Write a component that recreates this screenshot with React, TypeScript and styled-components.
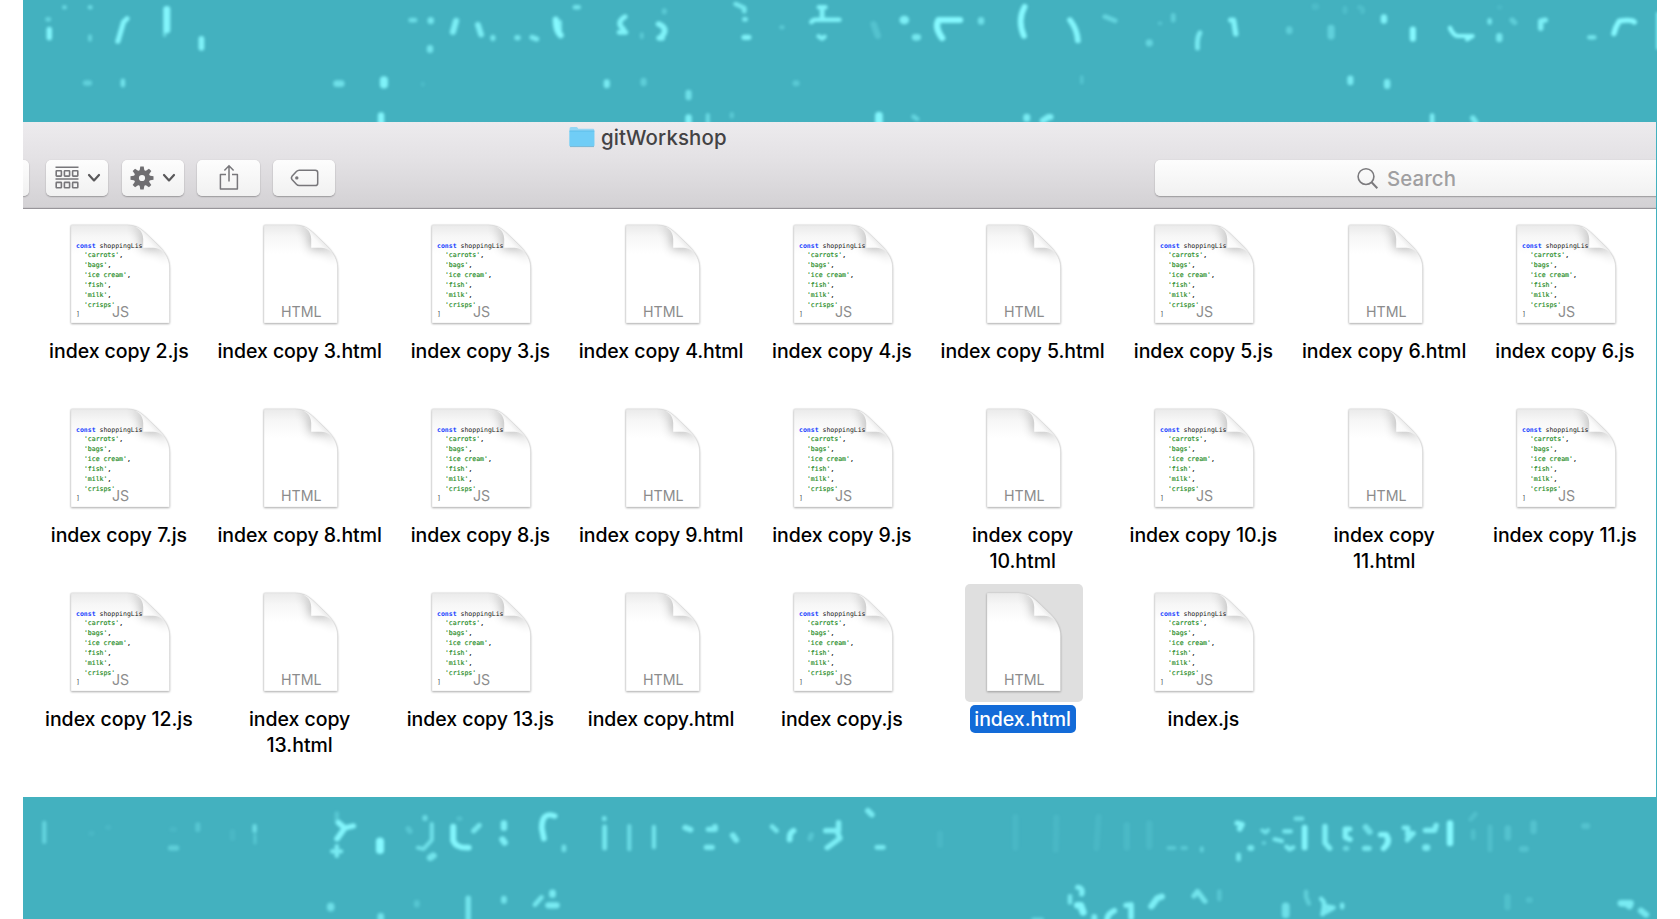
import React from "react";
import styled, { createGlobalStyle } from "styled-components";

const GlobalStyle = createGlobalStyle`
  *, *::before, *::after { box-sizing: border-box; }
  html, body { margin: 0; padding: 0; background: #fff; overflow: hidden; }
  body { font-family: Inter, "Liberation Sans", sans-serif; }
`;

const Stage = styled.main`
  width: 1634px;
  height: 919px;
  margin-left: 23px;
  background: #43b1bf;
  overflow: hidden;
  display: flex;
  flex-direction: column;
`;

const Band = styled.svg`
  display: block;
  flex: none;
  width: 1634px;
  height: 122px;
`;

const FinderWindow = styled.section`
  width: 1633px;
  height: 675px;
  flex: none;
  background: #fff;
  overflow: hidden;
`;

const Header = styled.header`
  height: 87px;
  background: linear-gradient(#edebee, #e3e1e4 45%, #d3d1d4);
  border-bottom: 1px solid #98959a;
  box-shadow: inset 0 -1px 0 #c9c7ca;
  display: flex;
  flex-direction: column;
`;

const TitleBar = styled.div`
  height: 38px;
  padding: 2px 0 0 546px;
  display: flex;
  align-items: flex-start;
  gap: 6px;
`;

const Title = styled.h1`
  margin: 0;
  font-size: 20.4px;
  line-height: 27px;
  font-weight: 450;
  letter-spacing: 0.15px;
  color: #434244;
`;

const FolderIcon = styled.svg`
  width: 26px;
  height: 22px;
  margin-top: 2px;
`;

const Toolbar = styled.div`
  height: 36px;
  display: flex;
`;

const ToolButton = styled.button<{ $gap?: number }>`
  width: 62.3px;
  height: 36px;
  margin: 0 13.4px 0 0;
  padding: 0;
  border: 0;
  border-radius: 5px;
  background: linear-gradient(#fdfdfd, #f1f1f1);
  box-shadow: 0 1px 1.5px rgba(0, 0, 0, 0.28), 0 0 1px rgba(0, 0, 0, 0.15);
  display: flex;
  align-items: center;
  justify-content: center;
  gap: ${(p) => p.$gap ?? 0}px;
  flex: none;
`;

const ClippedButton = styled(ToolButton)`
  width: 6px;
  margin-right: 17px;
  border-radius: 0 5px 5px 0;
`;

const Glyph = styled.svg`
  display: block;
  flex: none;
  overflow: visible;
`;

const SearchField = styled.div`
  width: 580px;
  height: 36px;
  margin-left: auto;
  margin-right: -79px;
  padding-left: 202px;
  flex: none;
  border-radius: 5px 0 0 5px;
  background: linear-gradient(#fdfdfd, #f1f1f1);
  box-shadow: 0 1px 1.5px rgba(0, 0, 0, 0.28), 0 0 1px rgba(0, 0, 0, 0.15);
  display: flex;
  align-items: center;
  gap: 9px;
  font-size: 20.4px;
  font-weight: 450;
  letter-spacing: 0.1px;
  color: #a09fa1;
`;

const FileGrid = styled.div`
  padding: 6.5px 0 0 5.5px;
  display: grid;
  grid-template-columns: repeat(9, 180.75px);
  grid-auto-rows: 184px;
`;

const FileItem = styled.div`
  display: flex;
  flex-direction: column;
  align-items: center;
`;

const Thumb = styled.div<{ $selected: boolean }>`
  width: 118px;
  height: 118px;
  margin-left: 2.4px;
  border-radius: 5px;
  background: ${(p) => (p.$selected ? "#dfdfdf" : "transparent")};
  display: flex;
  align-items: center;
  justify-content: center;
`;

const Label = styled.div<{ $selected: boolean }>`
  margin-top: 3px;
  padding: 1.4px 4.8px 0.6px;
  border-radius: 5px;
  font-size: 19.5px;
  line-height: 26.2px;
  font-weight: 450;
  text-align: center;
  white-space: pre-line;
  letter-spacing: -0.05px;
  color: ${(p) => (p.$selected ? "#fff" : "#000")};
  background: ${(p) => (p.$selected ? "#136bd8" : "transparent")};
`;

type Mark = [d: string, width: number, opacity: number];

/** Each tile is 560 px wide, drawn on a 1568-unit-wide sheet. */
const topTiles: Mark[][] = [
  [
    ["M180 22h1", 14, 0.6], ["M252 22h1", 14, 0.65], ["M134 58h2", 16, 0.5], ["M138 88v25", 17, 0.95],
    ["M252 108v12", 12, 0.5], ["M356 56L346 66L330 124", 16, 0.95], ["M467 28v62", 22, 0.95], ["M461 98v8", 12, 0.5],
    ["M564 116v28", 18, 0.9], ["M240 249h10", 18, 0.45], ["M344 242v14", 14, 0.7], ["M1150 60h12", 15, 0.65],
    ["M1206 60v3", 20, 0.75], ["M1277 62L1268 96", 19, 0.85], ["M1338 74L1347 104", 18, 0.85], ["M1380 112v4", 16, 0.75],
    ["M1448 113h2", 18, 0.75], ["M1490 112l12 5", 17, 0.8], ["M1556 58Q1556 94 1570 106", 19, 1], ["M1204 144v6", 20, 0.7],
    ["M943 251h12", 22, 0.65], ["M1075 240v14", 25, 0.9], ["M1067 346v28", 20, 0.95], ["M1184 250v5", 12, 0.15],
  ],
  [
    ["M42 22h10", 15, 0.7], ["M0 65v42", 12, 0.8], ["M182 50Q155 68 178 88M166 97h18", 16, 0.9], ["M229 102v10", 12, 0.35],
    ["M276 72Q306 86 284 110M278 114h8", 18, 0.9], ["M292 32v4", 16, 0.35], ["M492 12L516 24L516 34", 15, 0.75],
    ["M517 58h2", 16, 0.8], ["M516 112h12", 18, 0.9], ["M620 82h3", 14, 0.35], ["M725 22h18M734 28v24M704 66q4-7 12-7h66", 15, 0.9],
    ["M724 109l10 7l7-6", 14, 0.85], ["M963 60h2", 28, 0.85], ["M995 112h6", 22, 0.75], ["M1120 60h-60q-12 22 10 54", 20, 1],
    ["M1179 60v5", 20, 0.65], ["M1301 20Q1280 60 1299 108", 18, 1], ["M1428 60Q1448 88 1450 122", 18, 0.95],
    ["M1526 50l28 12", 16, 0.5], ["M131 246v10", 19, 0.8], ["M234 242v8", 19, 0.4], ["M360 278v14", 19, 0.65],
    ["M360 352v20", 20, 0.85], ["M414 345v25", 13, 0.55], ["M481 342v8", 13, 0.35], ["M893 346v24", 24, 0.95],
    ["M990 350l10 7", 15, 0.5], ["M660 250h2", 20, 0.35], ["M1307 351v5", 22, 0.8], ["M1352 362l16-11h5", 20, 0.85],
    ["M1461 230v18", 10, 0.3], ["M878 72l12 36", 20, 0.25],
  ],
  [
    ["M149 46v15", 15, 0.4], ["M82 128v2", 22, 0.5], ["M111 70h2", 12, 0.3], ["M224 98Q215 112 217 145", 15, 0.8],
    ["M310 60h8l6 42", 17, 0.9], ["M474 88v6", 20, 0.4], ["M591 84v25", 22, 0.45], ["M546 20h2", 22, 0.15],
    ["M630 24v12M670 22q12 2 9 14", 15, 0.18], ["M739 52v10", 20, 0.9], ["M820 88v28", 19, 1],
    ["M924 84Q933 106 945 108h42l-15 10", 14, 1], ["M1035 60v8", 14, 0.75], ["M1098 60l7 8", 17, 0.4],
    ["M1062 108v10", 20, 0.75], ["M1191 60l-13 3v22", 17, 0.85], ["M1314 112h14", 14, 0.75],
    ["M1440 66q-8-8-42-3q-12 20-15 38", 17, 1], ["M1506 40v105", 10, 0.9], ["M645 235v12", 19, 0.8],
    ["M748 246v12", 20, 0.8], ["M874 346v30", 14, 0.85], ["M988 354l8 14", 18, 0.75], ["M1062 22h2", 16, 0.12],
  ],
];

const bottomTiles: Mark[][] = [
  [
    ["M124 128v58", 13, 0.5], ["M478 204h16", 18, 0.4], ["M554 134v15", 16, 0.3], ["M713 138v15", 14, 0.6], ["M714 165v24", 10, 0.3],
    ["M255 160h2M302 142h2M482 148h6M651 155v20", 18, 0.1], ["M943 100v24", 14, 0.3], ["M948 128L965 144L989 138M965 145L944 176", 18, 0.95],
    ["M943 198v30M930 214h25", 14, 0.8], ["M1064 184v27", 25, 1], ["M1190 112v4", 16, 0.6], ["M1143 146l5 8", 17, 0.3],
    ["M1209 132v48L1186 207L1170 203", 13, 0.65], ["M1205 233l8-6", 22, 0.7], ["M1269 140v42Q1278 205 1312 203", 19, 0.95],
    ["M1284 116h5", 14, 0.25], ["M1342 136l-16 17", 16, 0.75], ["M1411 130v14M1407 178l6 10", 20, 0.85],
    ["M1553 108Q1517 93 1517 145L1523 176", 18, 0.95], ["M926 378v6", 23, 0.65], ["M1066 408v12", 20, 0.7], ["M1167 368v7", 18, 0.3],
    ["M1311 354v66", 17, 0.7], ["M1411 355v8", 18, 0.7], ["M1498 374l18-22", 15, 0.75], ["M1547 338v6M1536 376h22", 21, 0.8],
  ],
  [
    ["M11 200v10", 15, 0.65], ["M124 115v2M125 140v65", 15, 0.75], ["M194 138v70", 13, 0.6], ["M263 140v62", 13, 0.7],
    ["M351 143l14 6", 19, 0.8], ["M416 148h18v-8", 18, 0.8], ["M410 202h16", 17, 0.8], ["M484 166l9 14", 19, 0.8],
    ["M594 140l12 12", 16, 0.75], ["M654 152Q642 158 643 179", 18, 0.9], ["M704 164l-4 12", 16, 0.3],
    ["M780 128v24h-36M776 155l8 20L748 203", 17, 0.85], ["M862 92l11 12", 18, 0.8], ["M888 202h17", 16, 0.8],
    ["M1275 110v94M1390 112l-2 98M1508 110l-6 95M1064 160v35", 19, 0.1], ["M1428 348v20", 14, 0.75],
    ["M1450 322Q1465 324 1461 342", 17, 0.85], ["M1449 376h9l7 21", 22, 0.95], ["M1496 410v10", 18, 0.8],
    ["M1552 392Q1534 400 1532 418", 18, 0.9], ["M1325 418h25", 12, 0.5],
  ],
  [
    ["M19 135v68M82 130v70", 20, 0.12], ["M136 204h16M175 204h9", 14, 0.35], ["M229 204v8", 12, 0.45],
    ["M328 129l14 4-7 14", 17, 0.9], ["M365 204h2", 20, 0.75], ["M332 224v14", 15, 0.75], ["M398 151l10 7l7-8", 12, 0.7],
    ["M402 189h2", 12, 0.5], ["M433 178l20 5M460 154h18M466 200l9 8l10-6", 14, 0.8], ["M492 116h18", 14, 0.65],
    ["M517 142v61", 18, 0.95], ["M574 139v50L587 205", 17, 0.85], ["M643 147h-12v25l13 6", 17, 0.9],
    ["M632 205h2", 18, 0.55], ["M688 141l11 15", 19, 0.65], ["M685 205h12", 17, 0.75], ["M730 164h15q14 21-7 41", 18, 0.95],
    ["M795 143h11v35M804 160h18l-18 20", 15, 0.85], ["M885 136l-4 15h-26", 17, 0.85], ["M856 203h3", 22, 0.8],
    ["M924 130v60", 20, 1], ["M982 118l13-16M1036 140v70M989 154v20", 15, 0.2], ["M1086 145v28M1126 207h10M1158 130v24", 20, 0.25],
    ["M1300 138h8", 20, 0.25], ["M17 376l14-2v40", 17, 0.9], ["M117 350l-13 5-16 24", 20, 0.85],
    ["M207 348l10-14l21 30", 16, 0.7], ["M278 334v24", 14, 0.3], ["M464 378v26", 24, 0.65], ["M521 335v16l8 20", 14, 0.4],
    ["M563 356l8 10v17l-4 20M574 378l24 5-22 14M622 374v8", 14, 0.8], ["M1085 350v32M1145 360h2", 20, 0.2],
    ["M1403 370h26l-3 8", 22, 0.8], ["M1459 392l14 12", 20, 0.75],
  ],
];

function CodeBand({ tiles, shift, id }: { tiles: Mark[][]; shift: number; id: string }) {
  return (
    <Band viewBox="0 0 1634 122" aria-hidden="true">
      <defs>
        <filter id={id} x="-5%" y="-20%" width="110%" height="140%" colorInterpolationFilters="sRGB">
          <feGaussianBlur stdDeviation="1.5" />
        </filter>
      </defs>
      <g filter={`url(#${id})`} fill="none" stroke="#86f9ff" strokeLinecap="round" strokeLinejoin="round">
        {tiles.map((marks, t) => (
          <g key={t} transform={`translate(${t * 560 - 23} ${shift}) scale(0.35714 0.33333)`}>
            {marks.map(([d, width, opacity], i) => (
              <path key={i} d={d} strokeWidth={width * 0.9} opacity={opacity} />
            ))}
          </g>
        ))}
      </g>
    </Band>
  );
}

const codeLines: [string, string][] = [
  ["'carrots'", ","],
  ["'bags'", ","],
  ["'ice cream'", ","],
  ["'fish'", ","],
  ["'milk'", ","],
  ["'crisps'", ""],
];

const CodeText = styled.text`
  font-family: "DejaVu Sans Mono", monospace;
  font-size: 6.5px;
  stroke-width: 0.15px;
  white-space: pre;
`;

const KindText = styled.text`
  font-family: Inter, sans-serif;
  font-size: 14.2px;
  fill: #8c8c8c;
  text-anchor: middle;
`;

function DocIcon({ kind, id }: { kind: "js" | "html"; id: string }) {
  const w = kind === "js" ? 98.5 : 73.5;
  const page = `M0.5 0H${w - 42}C${w - 33} 0 ${w - 28} 4 ${w - 22} 10L${w - 10} 21.5C${w - 4} 28 ${w} 34 ${w} 43V98H0V0.5Z`;
  const fold = `M${w - 34} 1.8C${w - 29} 4 ${w - 26.3} 9 ${w - 26.3} 14V22.8H${w - 16}C${w - 10} 23 ${w - 5} 27 ${w - 2.5} 32C${w - 5} 27 ${w - 8} 23.5 ${w - 10} 21.5L${w - 22} 10C${w - 27} 5 ${w - 31} 2.3 ${w - 34} 1.8Z`;
  return (
    <Glyph width={w} height={98.5} viewBox={`0 0 ${w} 98.5`}>
      <defs>
        <linearGradient id={`${id}g`} x1="0" y1="0" x2="0" y2="1">
          <stop offset="0" stopColor="#eaeaea" />
          <stop offset="0.12" stopColor="#f7f7f7" />
          <stop offset="0.3" stopColor="#fff" />
        </linearGradient>
        <linearGradient id={`${id}f`} gradientUnits="userSpaceOnUse" x1={w - 26} y1="23" x2={w - 16} y2="14">
          <stop offset="0" stopColor="#fff" />
          <stop offset="0.6" stopColor="#fafafa" />
          <stop offset="1" stopColor="#e8e8e8" />
        </linearGradient>
        <clipPath id={`${id}c`}>
          <path d={page} />
        </clipPath>
        <filter id={`${id}b`} x="-80%" y="-80%" width="260%" height="260%">
          <feGaussianBlur stdDeviation="5.5" />
        </filter>
        <filter id={`${id}s`} x="-10%" y="-10%" width="120%" height="120%">
          <feGaussianBlur stdDeviation="1.1" />
        </filter>
      </defs>
      <path d={page} transform="translate(0 0.7)" fill="#000" opacity="0.4" filter={`url(#${id}s)`} />
      <path d={page} fill={`url(#${id}g)`} stroke="#d4d4d4" strokeWidth="0.4" />
      {kind === "js" && (
        <>
          <CodeText x="5" y="22.6" stroke="none">
            <tspan fill="#1440ff" fontWeight="700">const</tspan>
            <tspan fill="#222"> shoppingLis</tspan>
          </CodeText>
          {codeLines.map(([str, tail], i) => (
            <CodeText key={str} x="12.9" y={32.4 + i * 9.83}>
              <tspan fill="#228a22" stroke="#228a22">{str}</tspan>
              <tspan fill="#222" stroke="#222">{tail}</tspan>
            </CodeText>
          ))}
          <CodeText x="5" y="91.2" fill="#444">]</CodeText>
        </>
      )}
      <g clipPath={`url(#${id}c)`}>
        <path d={fold} fill="#000" stroke="#000" strokeWidth="3" opacity="0.3" filter={`url(#${id}b)`} />
      </g>
      <path d={fold} fill={`url(#${id}f)`} />
      <KindText x={kind === "js" ? 49.5 : 37.3} y="92.3">{kind.toUpperCase()}</KindText>
    </Glyph>
  );
}

const Chevron = () => (
  <Glyph width="12" height="8" viewBox="0 0 12 8">
    <path d="M1 1l5 5.4L11 1" fill="none" stroke="#59585a" strokeWidth="2.2" strokeLinecap="round" strokeLinejoin="round" />
  </Glyph>
);

const ArrangeIcon = () => (
  <Glyph width="24" height="22" viewBox="0 0 24 22" fill="none" stroke="#77767a" strokeWidth="1.6">
    <path d="M0.5 0.3H23.5M0.5 12H23.5" strokeWidth="1.4" />
    {[3.7, 15.4].map((y) =>
      [1.2, 9.4, 17.6].map((x) => <rect key={`${x}-${y}`} x={x} y={y} width="5.2" height="5.4" rx="0.6" />)
    )}
  </Glyph>
);

const GearIcon = () => (
  <Glyph width="24" height="24" viewBox="-12 -12 24 24">
    {[0, 45, 90, 135, 180, 225, 270, 315].map((a) => (
      <path key={a} d="M-2.5 -7L-1.7 -11.5H1.7L2.5 -7Z" fill="#6f6e71" transform={`rotate(${a})`} />
    ))}
    <circle r="5.6" fill="none" stroke="#6f6e71" strokeWidth="5" />
  </Glyph>
);

const ShareIcon = () => (
  <Glyph width="20" height="26" viewBox="0 0 20 26" fill="none" stroke="#77767a" strokeWidth="1.5">
    <path d="M7 9.5H1.4V24H18.4V9.5H13" strokeLinejoin="round" />
    <path d="M10 16.5V1.5M5.4 5.5L10 0.8L14.6 5.5" />
  </Glyph>
);

const TagIcon = () => (
  <Glyph width="29" height="18" viewBox="0 0 29 18" fill="none" stroke="#77767a" strokeWidth="1.5">
    <path d="M9.2 1.2H25.3Q27.7 1.2 27.7 3.6V14.2Q27.7 16.6 25.3 16.6H9.2Q7.6 16.6 6.4 15.3L2 10.5Q0.8 8.9 2 7.3L6.4 2.5Q7.6 1.2 9.2 1.2Z" />
    <circle cx="6.8" cy="8.9" r="1.7" fill="#77767a" stroke="none" />
  </Glyph>
);

const SearchIcon = () => (
  <Glyph width="21" height="22" viewBox="0 0 21 22" fill="none" stroke="#7b7a7d" strokeWidth="1.6">
    <circle cx="9" cy="9.6" r="7.9" />
    <path d="M14.6 15.3L20.3 21.3" strokeWidth="2" />
  </Glyph>
);

const files = [
  "index copy 2.js", "index copy 3.html", "index copy 3.js", "index copy 4.html", "index copy 4.js",
  "index copy 5.html", "index copy 5.js", "index copy 6.html", "index copy 6.js",
  "index copy 7.js", "index copy 8.html", "index copy 8.js", "index copy 9.html", "index copy 9.js",
  "index copy\n10.html", "index copy 10.js", "index copy\n11.html", "index copy 11.js",
  "index copy 12.js", "index copy\n13.html", "index copy 13.js", "index copy.html", "index copy.js",
  "index.html", "index.js",
];

export default function App() {
  return (
    <>
      <GlobalStyle />
      <Stage>
        <CodeBand tiles={topTiles} shift={0} id="top-soft" />
        <FinderWindow>
          <Header>
            <TitleBar>
              <FolderIcon viewBox="0 0 26 22">
                <path d="M0.5 3Q0.5 1 2 1H7.5Q8.5 1 9.3 2.8H24Q25.3 2.8 25.3 4V19.5Q25.3 20.5 24 20.5H1.7Q0.5 20.5 0.5 19.3Z" fill="#94d7f5" />
                <path d="M0.5 5H25.3V19.5Q25.3 20.5 24 20.5H1.7Q0.5 20.5 0.5 19.3Z" fill="#70cdf6" />
                <path d="M0.5 5H25.3" stroke="#58b9e6" strokeWidth="0.8" />
                <path d="M1 20.6H25" stroke="#74afcb" strokeWidth="0.8" />
              </FolderIcon>
              <Title>gitWorkshop</Title>
            </TitleBar>
            <Toolbar>
              <ClippedButton aria-label="View" />
              <ToolButton $gap={9} aria-label="Arrange"><ArrangeIcon /><Chevron /></ToolButton>
              <ToolButton $gap={9} aria-label="Actions"><GearIcon /><Chevron /></ToolButton>
              <ToolButton aria-label="Share"><ShareIcon /></ToolButton>
              <ToolButton aria-label="Tags"><TagIcon /></ToolButton>
              <SearchField><SearchIcon />Search</SearchField>
            </Toolbar>
          </Header>
          <FileGrid>
            {files.map((name, i) => {
              const selected = name === "index.html";
              return (
                <FileItem key={name}>
                  <Thumb $selected={selected}>
                    <DocIcon kind={name.endsWith(".js") ? "js" : "html"} id={`doc${i}`} />
                  </Thumb>
                  <Label $selected={selected}>{name}</Label>
                </FileItem>
              );
            })}
          </FileGrid>
        </FinderWindow>
        <CodeBand tiles={bottomTiles} shift={-17} id="bottom-soft" />
      </Stage>
    </>
  );
}
